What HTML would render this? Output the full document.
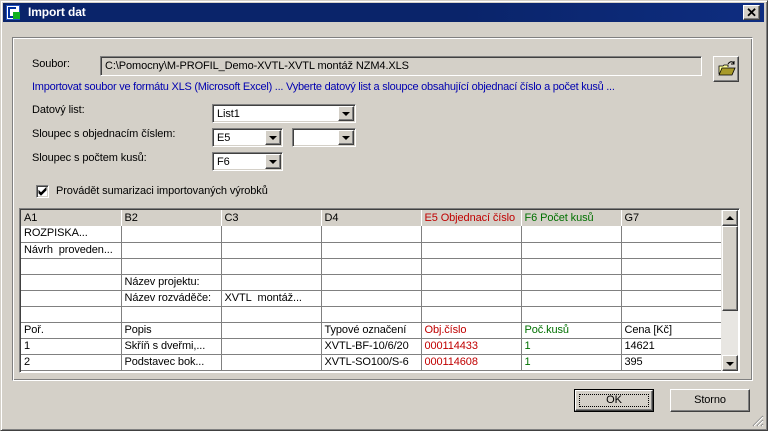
<!DOCTYPE html><html><head><style>
*{margin:0;padding:0;box-sizing:border-box}
body{width:768px;height:431px;background:#d4d0c8;font:11px "Liberation Sans",sans-serif;color:#000;position:relative;overflow:hidden;letter-spacing:-0.1px}
.a{position:absolute}
.win{left:0;top:0;width:768px;height:431px;border:1px solid;border-color:#d4d0c8 #404040 #404040 #d4d0c8;box-shadow:inset 1px 1px #fff,inset -1px -1px #808080}
.title{left:3px;top:3px;width:761px;height:19px;background:linear-gradient(90deg,#0a246a,#0a246a 60%,#0e2d80);color:#fff;font-weight:bold;font-size:12px;line-height:19px;padding-left:25px}
.sunk{background:#fff;border:1px solid;border-color:#808080 #fff #fff #808080;box-shadow:inset 1px 1px #404040,inset -1px -1px #d4d0c8}
.btn{background:#d4d0c8;border:1px solid;border-color:#fff #404040 #404040 #fff;box-shadow:inset -1px -1px #808080}
.dd{position:absolute;right:1px;top:1px;width:16px;height:15px}
.dd:after{content:"";position:absolute;left:3px;top:5px;border:4px solid transparent;border-top:4px solid #000;border-bottom:0}
.grp{left:12px;top:37px;width:741px;height:344px;border:1px solid;border-color:#808080 #fff #fff #808080;box-shadow:inset 1px 1px #fff,inset -1px -1px #808080}
table{border-collapse:collapse;table-layout:fixed}
td{height:16px;border-right:1px solid #808080;border-bottom:1px solid #808080;padding:0 3px;white-space:nowrap;overflow:hidden;line-height:15px}
tr.h td{background:#d4d0c8;border-right:1px solid #fff;border-left:1px solid #808080;border-bottom:none}
.r{color:#c00000}.g{color:#007000}
</style></head><body>
<div class="a win"></div>
<div class="a title">Import dat</div>
<div class="a" style="left:6px;top:5px;width:14px;height:15px;background:#fff;border:1px solid #2050c0"><div class="a" style="left:1px;top:1px;width:8px;height:11px;border-left:2px solid #0030a0;border-top:2px solid #0030a0;border-bottom:2px solid #0030a0"></div><div class="a" style="left:6px;top:6px;width:7px;height:7px;background:#10b020"></div></div>
<div class="a btn" style="left:743px;top:5px;width:17px;height:15px;font:bold 13px 'Liberation Sans';text-align:center;line-height:13px">✕</div>
<div class="a grp"></div>
<div class="a" style="left:32px;top:58px">Soubor:</div>
<div class="a" style="left:100px;top:56px;width:602px;height:20px;background:#d4d0c8;border:1px solid;border-color:#808080 #fff #fff #808080;box-shadow:inset 1px 1px #404040;padding:3px 0 0 4px">C:\Pomocny\M-PROFIL_Demo-XVTL-XVTL montáž NZM4.XLS</div>
<div class="a btn" style="left:713px;top:56px;width:26px;height:26px"><svg width="24" height="24" viewBox="0 0 24 24"><path d="M5 17V9h4l1-1h4v2" fill="#ffff99" stroke="#000" stroke-width=".8"/><path d="M5 18l3-7h13l-3 7z" fill="#a89a28" stroke="#000" stroke-width=".8"/><path d="M14 7c2-3 5-3 6 0" fill="none" stroke="#000"/><path d="M20 4v3h-3" fill="none" stroke="#000"/></svg></div>
<div class="a" style="left:32px;top:81px;color:#0000b0;letter-spacing:-0.25px">Importovat soubor ve formátu XLS (Microsoft Excel) ... Vyberte datový list a sloupce obsahující objednací číslo a počet kusů ...</div>
<div class="a" style="left:32px;top:104px">Datový list:</div>
<div class="a sunk" style="left:212px;top:104px;width:144px;height:19px;padding:3px 4px">List1<div class="dd btn"></div></div>
<div class="a" style="left:32px;top:128px">Sloupec s objednacím číslem:</div>
<div class="a sunk" style="left:212px;top:128px;width:71px;height:19px;padding:3px 4px">E5<div class="dd btn"></div></div>
<div class="a sunk" style="left:292px;top:128px;width:64px;height:19px"><div class="dd btn"></div></div>
<div class="a" style="left:32px;top:152px">Sloupec s počtem kusů:</div>
<div class="a sunk" style="left:212px;top:152px;width:71px;height:19px;padding:3px 4px">F6<div class="dd btn"></div></div>
<div class="a sunk" style="left:36px;top:185px;width:13px;height:13px"><svg class="a" style="left:1px;top:1px" width="9" height="9"><path d="M1 4l2 2 5-5v2l-5 5-2-2z" fill="#000" stroke="#000" stroke-width="1"/></svg></div>
<div class="a" style="left:56px;top:185px">Provádět sumarizaci importovaných výrobků</div>
<div class="a" style="left:19px;top:208px;width:721px;height:165px;border:1px solid;border-color:#808080 #fff #fff #808080;box-shadow:inset 1px 1px #404040;background:#fff;overflow:hidden">
<table class="a" style="left:1px;top:1px;width:700px">
<colgroup><col style="width:100px"><col style="width:100px"><col style="width:100px"><col style="width:100px"><col style="width:100px"><col style="width:100px"><col style="width:100px"></colgroup>
<tr class="h"><td style="border-left:none">A1</td><td>B2</td><td>C3</td><td>D4</td><td class="r">E5 Objednací číslo</td><td class="g">F6 Počet kusů</td><td>G7</td></tr>
<tr><td>ROZPISKA...</td><td></td><td></td><td></td><td></td><td></td><td></td></tr>
<tr><td>Návrh&nbsp; proveden...</td><td></td><td></td><td></td><td></td><td></td><td></td></tr>
<tr><td></td><td></td><td></td><td></td><td></td><td></td><td></td></tr>
<tr><td></td><td>Název projektu:</td><td></td><td></td><td></td><td></td><td></td></tr>
<tr><td></td><td>Název rozváděče:</td><td>XVTL&nbsp; montáž...</td><td></td><td></td><td></td><td></td></tr>
<tr><td></td><td></td><td></td><td></td><td></td><td></td><td></td></tr>
<tr><td>Poř.</td><td>Popis</td><td></td><td>Typové označení</td><td class="r">Obj.číslo</td><td class="g">Poč.kusů</td><td>Cena [Kč]</td></tr>
<tr><td>1</td><td>Skříň s dveřmi,...</td><td></td><td>XVTL-BF-10/6/20</td><td class="r">000114433</td><td class="g">1</td><td>14621</td></tr>
<tr><td>2</td><td>Podstavec bok...</td><td></td><td>XVTL-SO100/S-6</td><td class="r">000114608</td><td class="g">1</td><td>395</td></tr>
</table>
<div class="a" style="left:701px;top:1px;width:17px;height:161px;background:#e8e6e2"></div>
<div class="a btn" style="left:702px;top:1px;width:16px;height:16px"><div class="a" style="left:3px;top:5px;border:4px solid transparent;border-bottom:4px solid #000;border-top:0"></div></div>
<div class="a btn" style="left:702px;top:17px;width:16px;height:85px"></div>
<div class="a btn" style="left:702px;top:146px;width:16px;height:16px"><div class="a" style="left:3px;top:6px;border:4px solid transparent;border-top:4px solid #000;border-bottom:0"></div></div>
</div>
<div class="a" style="left:574px;top:389px;width:80px;height:23px;border:1px solid #000"><div class="a btn" style="left:0;top:0;width:78px;height:21px;text-align:center;line-height:19px"><div class="a" style="left:3px;top:3px;width:70px;height:13px;border:1px dotted #000"></div>OK</div></div>
<div class="a btn" style="left:670px;top:389px;width:80px;height:23px;text-align:center;line-height:21px">Storno</div>
<svg class="a" style="left:752px;top:415px" width="12" height="12"><path d="M11 1L1 11M11 5L5 11M11 9L9 11" stroke="#808080" stroke-width="1.2"/><path d="M11 2L2 11M11 6L6 11M11 10L10 11" stroke="#fff"/></svg>
</body></html>
